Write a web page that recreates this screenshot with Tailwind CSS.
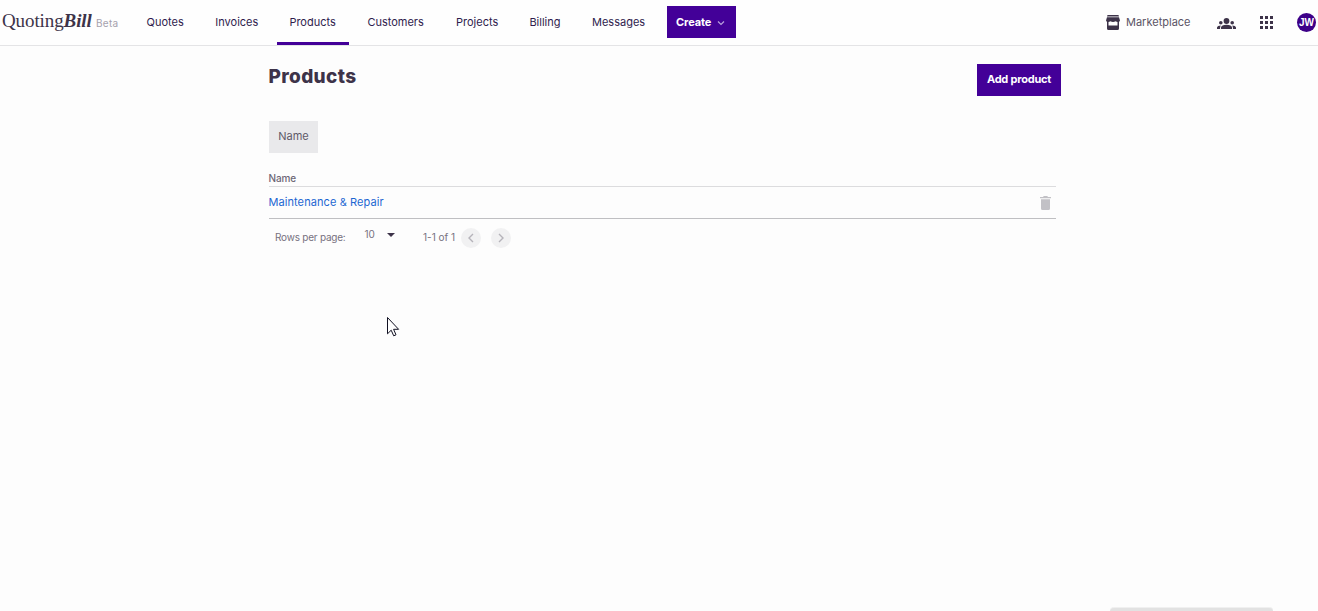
<!DOCTYPE html>
<html lang="en">
<head>
    <meta charset="UTF-8">
    <meta name="viewport" content="width=device-width, initial-scale=1.0">
    <title>Products - QuotingBill</title>

    <!-- Tailwind CSS -->
    <script src="https://cdn.jsdelivr.net/npm/@tailwindcss/browser@4"></script>
</head>
<body class="relative h-[611px] overflow-hidden bg-[#fdfdfd] font-['Inter',sans-serif] text-[11px] text-[#3d3349]">

    <!-- Header -->
    <header class="flex h-[46px] items-start justify-between border-b border-[#e4e4e6] bg-[#fefefe]">
        <div class="flex h-[45px]">
            <a href="#" class="flex w-[134px] items-baseline pl-[2px] pt-[8px] whitespace-nowrap">
                <span class="w-[90px] font-['Liberation_Serif',serif] text-[19px] leading-[26px] tracking-[-0.1px]">Quoting<b class="italic">Bill</b></span>
                <span class="ml-[4px] text-[10px] tracking-[0.3px] text-[#a5a1ad]">Beta</span>
            </a>

            <!-- Main Navigation -->
            <nav class="flex pl-px leading-[45px] text-[#2f1c4d]">
                <a href="#" class="mr-[7px] w-[62px] px-[11.5px]">Quotes</a>
                <a href="#" class="mr-[4px] w-[69px] px-[11.3px]">Invoices</a>
                <a href="#" class="mr-[6px] w-[72px] border-b-3 border-[#430098] px-[12.4px]">Products</a>
                <a href="#" class="mr-[7px] w-[82px] px-[12.4px]">Customers</a>
                <a href="#" class="mr-[6px] w-[67px] px-3">Projects</a>
                <a href="#" class="mr-[7px] w-[56px] px-[12.4px]">Billing</a>
                <a href="#" class="mr-[10px] w-[77px] px-[12px]">Messages</a>
            </nav>
            <button class="mt-[6px] flex h-8 w-[69px] items-center bg-[#430098] pl-[9px] font-bold text-white">
                <span class="w-[41px] text-left tracking-[-0.1px]">Create</span>
                <svg class="mt-px h-[6px] w-[8px]" viewBox="0 0 8 6" fill="none" stroke="#b9a0dc" stroke-width="1.2"><path d="M1 1.5 4 4.5 7 1.5" /></svg>
            </button>
        </div>

        <div class="flex h-[45px] items-center">
            <svg class="mr-[6px] h-[15px] w-[14px]" viewBox="0 0 14 15" fill="#3d3349"><path d="M1.500 0h11l.5 1.500H1z" /><path d="M1 2.300h12L14 5.500Q13.500 7 12 7T9.500 6.200Q8.500 7 7 7T4.500 6.200Q3.500 7 2 7T0 5.500z" /><path d="M1 6h1.500v4.500h9V6H13v7.500Q13 15 11.500 15h-9Q1 15 1 13.500z" /></svg>
            <a href="#" class="w-[91px] text-[#5b5465]">Marketplace</a>
            <svg class="mr-[24px] mt-[3px] h-[12px] w-[19px]" viewBox="0 0 19 12" fill="#3d3349"><circle cx="9.500" cy="3" r="2.900" /><circle cx="3.800" cy="4.700" r="1.800" /><circle cx="15.200" cy="4.700" r="1.800" /><path d="M4 11V9.500Q4.500 6.800 9.500 6.800t5.500 2.700V11zM0 11V9.600Q.5 7.600 3.800 7.500 3 8.500 3 11zM19 11V9.600Q18.500 7.600 15.200 7.500 16 8.500 16 11z" /></svg>
            <svg class="mr-[24px] h-[13px] w-[13px]" viewBox="0 0 13 13" fill="#3d3349"><path d="M0 0h3v3H0zM5 0h3v3H5zM10 0h3v3h-3zM0 5h3v3H0zM5 5h3v3H5zM10 5h3v3h-3zM0 10h3v3H0zM5 10h3v3H5zM10 10h3v3h-3z" /></svg>
            <div class="mr-[2px] flex h-[19px] w-[19px] items-center justify-center rounded-full bg-[#3d0088] pb-px font-['Liberation_Sans',sans-serif] text-[10px] font-bold text-white">JW</div>
        </div>
    </header>

    <!-- Main Content Area -->
    <main class="ml-[268px] w-[793px] pt-[18px]">
        <div class="flex h-[57px] items-start justify-between">
            <h1 class="pl-[0.5px] pt-px text-[19px] leading-[24px] font-extrabold tracking-[0.35px]">Products</h1>
            <button class="h-8 w-[84px] bg-[#430098] pb-[2px] font-bold whitespace-nowrap text-white tracking-[-0.22px]">Add product</button>
        </div>
        <button class="ml-px block h-8 w-[49px] bg-[#e9e9eb] pb-px text-[#5f5969]">Name</button>

        <!-- Products Table -->
        <div class="ml-px mt-[18px] w-[787px]">
            <div class="h-[16px] border-b border-[#dcdcde] text-[10px] leading-[15px] font-medium tracking-[-0.1px] text-[#6d6776]"><span class="-ml-[0.5px]">Name</span></div>
            <div class="flex h-[32px] items-center justify-between border-b border-[#bfbfc2] pr-[5px]">
                <a href="#" class="-ml-[0.6px] tracking-[0.09px] text-[#1d67d2]">Maintenance &amp; Repair</a>
                <svg class="h-[14px] w-[11px]" viewBox="0 0 11 14" fill="#c2c1c6"><path d="M0 1h3l.8-1h3.400l.8 1h3v1.200H0zM1 3.200h9V12.500Q10 14 8.500 14h-6Q1 14 1 12.500z" /></svg>
            </div>
        </div>

        <!-- Pagination -->
        <div class="ml-[7px] mt-[9px] flex h-5 items-center text-[10px] text-[#777180]">
            <span class="w-[89.5px] pb-px tracking-[-0.22px]">Rows per page:</span>
            <span class="mb-[7px] w-[22.5px]">10</span>
            <svg class="mb-[6px] mr-[27px] h-[4px] w-[9px]" viewBox="0 0 9 4" fill="#3d3349"><path d="M0 0h8L4 4z" /></svg>
            <span class="w-[38px] pb-px">1-1 of 1</span>
            <button class="mr-[10px] flex h-5 w-5 items-center justify-center rounded-full bg-[#f1f1f2]">
                <svg class="h-[10px] w-[6px]" viewBox="0 0 6 10" fill="none" stroke="#b5b3ba" stroke-width="1.400"><path d="M5 1 1 5l4 4" /></svg>
            </button>
            <button class="flex h-5 w-5 items-center justify-center rounded-full bg-[#f1f1f2]">
                <svg class="h-[10px] w-[6px]" viewBox="0 0 6 10" fill="none" stroke="#b5b3ba" stroke-width="1.400"><path d="M1 1l4 4-4 4" /></svg>
            </button>
        </div>
    </main>

    <!-- Mouse pointer -->
    <svg class="absolute left-[387px] top-[317px] h-[20px] w-[13px]" viewBox="0 0 13 20" fill="#fff" stroke="#111122" stroke-width="1"><path d="M.5.500v16.300l3.700-3.600 2.500 5.600 2.300-1-2.400-5.500h5z" /></svg>

    <!-- Top edge of the chat widget -->
    <div class="absolute bottom-0 left-[1110px] h-[4px] w-[163px] rounded-t-[8px] border-t border-[#f0f0f0] bg-[#e2e2e2]"></div>

</body>
</html>
